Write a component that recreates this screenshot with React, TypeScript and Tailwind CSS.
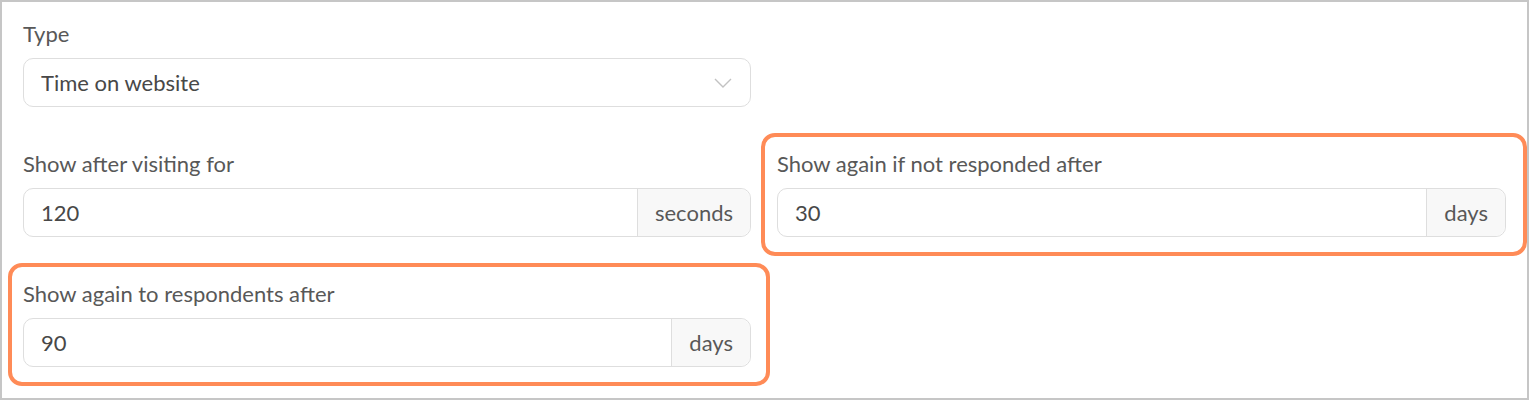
import type { ReactNode } from "react";

function Field({
  label,
  children,
  highlight,
}: {
  label: string;
  children: ReactNode;
  highlight?: "left" | "right";
}) {
  const box =
    highlight === "left"
      ? "-ml-[15px] -mr-[19px] -my-[19px] pl-[11px] pr-[15px] py-[15px] border-[4px] border-[#ff8b57] rounded-[14px]"
      : highlight === "right"
        ? "-ml-[16px] -mr-[21px] -my-[19px] pl-[12px] pr-[17px] py-[15px] border-[4px] border-[#ff8b57] rounded-[14px]"
        : "";
  return (
    <div className={box}>
      <div className="h-[24px] text-[22px] leading-[24px] text-[#585858]">{label}</div>
      <div className="mt-[12px]">{children}</div>
    </div>
  );
}

function AddonInput({ value, unit }: { value: string; unit: string }) {
  return (
    <div className="flex h-[49px] rounded-[10px] border border-[#dedede] bg-white">
      <div className="flex flex-1 items-center px-[17px] text-[22px] text-[#484848]">{value}</div>
      <div className="flex items-center rounded-r-[10px] border-l border-[#dedede] bg-[#f8f8f8] px-[17px] text-[22px] text-[#585858]">
        {unit}
      </div>
    </div>
  );
}

export default function App() {
  return (
    <div
      className="h-[400px] w-[1529px] border-2 border-[#c6c6c6] bg-white"
      style={{ fontFamily: "Lato, 'Noto Sans', sans-serif" }}
    >
      <div className="grid grid-cols-[728px_729px] gap-x-[26px] gap-y-[45px] pl-[21px] pt-[20px]">
        <Field label="Type">
          <div className="flex h-[49px] items-center justify-between rounded-[10px] border border-[#dedede] bg-white pl-[17px] pr-[18px] text-[22px] text-[#484848]">
            <span>Time on website</span>
            <svg width="18" height="10" viewBox="0 0 18 10" fill="none">
              <path d="M1 1l8 8 8-8" stroke="#c2c2c2" strokeWidth="1.4" />
            </svg>
          </div>
        </Field>
        <div />
        <Field label="Show after visiting for">
          <AddonInput value="120" unit="seconds" />
        </Field>
        <Field label="Show again if not responded after" highlight="right">
          <AddonInput value="30" unit="days" />
        </Field>
        <Field label="Show again to respondents after" highlight="left">
          <AddonInput value="90" unit="days" />
        </Field>
      </div>
    </div>
  );
}
